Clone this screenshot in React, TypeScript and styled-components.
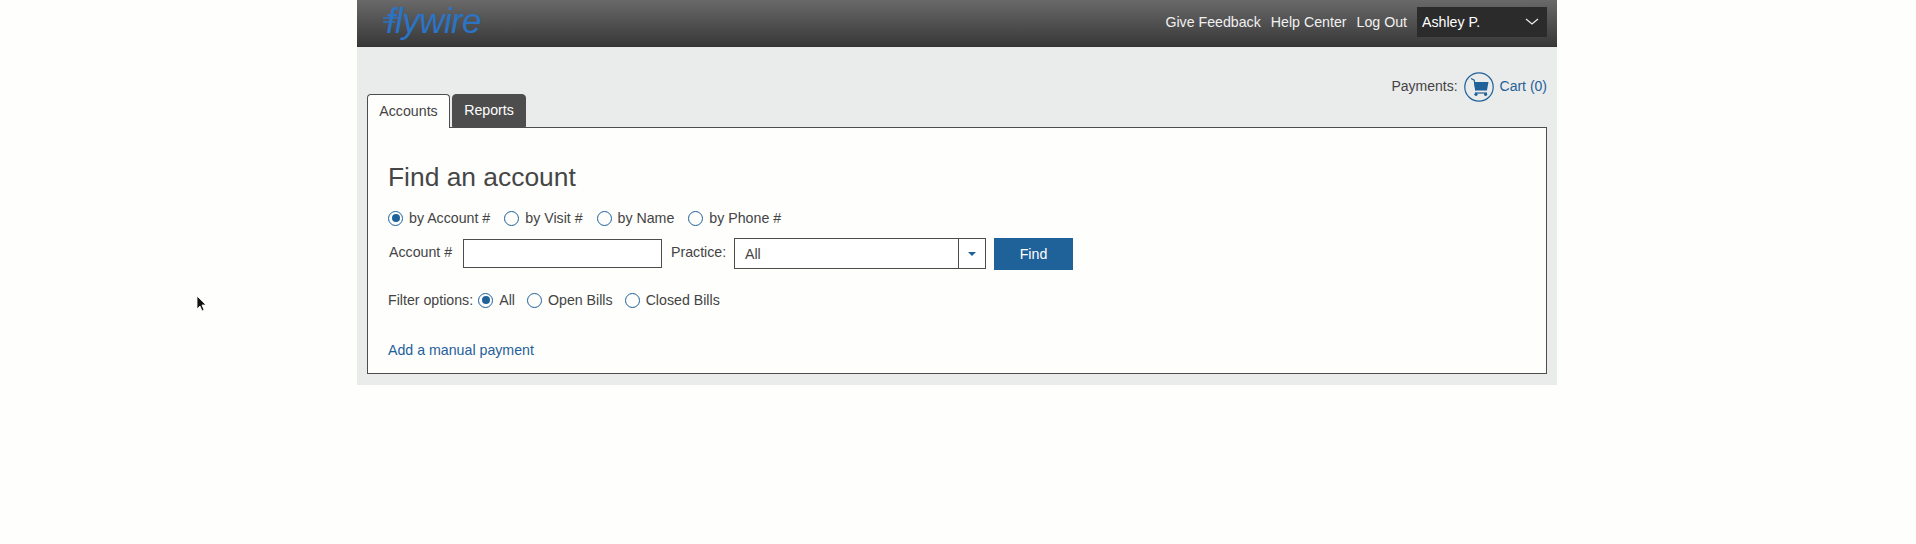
import React from 'react';
import styled, { createGlobalStyle } from 'styled-components';

const GlobalStyle = createGlobalStyle`
  html, body {
    margin: 0;
    padding: 0;
    background: #fefefd;
    font-family: "Liberation Sans", Arial, sans-serif;
    font-size: 14.2px;
    color: #444;
  }
`;

const Page = styled.div`
  position: relative;
  width: 1916px;
  height: 544px;
  overflow: hidden;
`;

const Container = styled.div`
  width: 1200px;
  margin-left: 357px;
  background: #eaebeb;
`;

const Header = styled.header`
  height: 47px;
  box-sizing: border-box;
  display: flex;
  align-items: center;
  justify-content: space-between;
  padding: 0 10px 0 25px;
  background: linear-gradient(#696969, #383838);
  border-bottom: 1px solid #333;
`;

const Logo = styled.div`
  position: relative;
  height: 44px;
  padding-left: 4px;
`;

const LogoMark = styled.svg`
  position: absolute;
  left: 0;
  top: 14px;
`;

const LogoText = styled.div`
  font-family: "Liberation Sans", Arial, sans-serif;
  font-style: italic;
  font-size: 35px;
  line-height: 40px;
  letter-spacing: -0.6px;
  color: #2a73c5;
`;

const HeaderNav = styled.nav`
  display: flex;
  align-items: center;
  gap: 10px;
  margin-bottom: 2px;
`;

const HeaderLink = styled.a`
  color: #f0f0f0;
`;

const UserMenu = styled.div`
  width: 130px;
  height: 30px;
  box-sizing: border-box;
  display: flex;
  align-items: center;
  justify-content: space-between;
  padding: 0 8px 0 5px;
  background: #2b2b2b;
  color: #fff;
`;

const Main = styled.main`
  padding: 0 10px 11px;
`;

const PaymentRow = styled.div`
  height: 55px;
  display: flex;
  align-items: flex-end;
  justify-content: flex-end;
  gap: 6px;
  font-size: 14px;
`;

const PaymentText = styled.span`
  line-height: 28px;
  margin-bottom: 2px;
`;

const BlueLink = styled.a`
  color: #1f6199;
  line-height: 28px;
  margin-bottom: 2px;
`;

const Tabs = styled.div`
  display: flex;
  gap: 2px;
  margin-top: -8px;
  margin-bottom: -1px;
  position: relative;
  z-index: 1;
`;

const Tab = styled.div<{ $active?: boolean }>`
  box-sizing: border-box;
  display: flex;
  align-items: center;
  justify-content: center;
  padding-bottom: 1px;
  border-radius: 4px 4px 0 0;
  width: ${(p) => (p.$active ? '83px' : '74px')};
  height: ${(p) => (p.$active ? '34px' : '33px')};
  background: ${(p) => (p.$active ? '#fefefd' : '#4d4d4d')};
  color: ${(p) => (p.$active ? '#444' : '#fff')};
  border: 1px solid #4d4d4d;
  border-bottom: ${(p) => (p.$active ? 'none' : '1px solid #4d4d4d')};
`;

const Panel = styled.section`
  height: 247px;
  box-sizing: border-box;
  padding: 33px 20px 0;
  background: #fefefd;
  border: 1px solid #4d4d4d;
`;

const Title = styled.h1`
  margin: 0;
  font-size: 26.4px;
  font-weight: 400;
  line-height: 32px;
  color: #464646;
`;

const RadioRow = styled.div<{ $top: number; $gap: number }>`
  display: flex;
  align-items: center;
  gap: ${(p) => p.$gap}px;
  height: 20px;
  margin-top: ${(p) => p.$top}px;
`;

const RadioOption = styled.label`
  display: flex;
  align-items: center;
  gap: 6px;
`;

const RadioCircle = styled.span<{ $checked?: boolean }>`
  width: 15px;
  height: 15px;
  box-sizing: border-box;
  border: 1.5px solid #1f6199;
  border-radius: 50%;
  display: flex;
  align-items: center;
  justify-content: center;

  &::after {
    content: '';
    display: ${(p) => (p.$checked ? 'block' : 'none')};
    width: 8px;
    height: 8px;
    border-radius: 50%;
    background: #1f6199;
  }
`;

const SearchRow = styled.div`
  display: flex;
  align-items: center;
  margin-top: 10px;
  height: 31px;
`;

const FieldLabel = styled.label<{ $left: number; $width: number }>`
  margin-left: ${(p) => p.$left}px;
  width: ${(p) => p.$width}px;
  margin-top: -3px;
`;

const TextInput = styled.input`
  width: 199px;
  height: 29px;
  box-sizing: border-box;
  border: 1px solid #4d4d4d;
  background: #fff;
  padding: 0;
  outline: none;
`;

const SelectBox = styled.div`
  width: 252px;
  height: 31px;
  box-sizing: border-box;
  display: flex;
  border: 1px solid #4d4d4d;
  background: #fff;
`;

const SelectValue = styled.span`
  flex: 1;
  padding-left: 10px;
  line-height: 30px;
`;

const SelectArrow = styled.span`
  width: 26px;
  display: flex;
  align-items: center;
  justify-content: center;
  border-left: 1px solid #4d4d4d;

  &::after {
    content: '';
    border-left: 4px solid transparent;
    border-right: 4px solid transparent;
    border-top: 4px solid #1f6199;
  }
`;

const FindButton = styled.button`
  width: 79px;
  height: 32px;
  margin-left: 8px;
  border: none;
  background: #1f6199;
  color: #fff;
  font: inherit;
`;

const FilterLabel = styled.span`
  margin-right: -7px;
`;

const FooterLink = styled.a`
  display: block;
  margin-top: 30px;
  color: #1f6199;
  line-height: 20px;
`;

const Cursor = styled.svg`
  position: absolute;
  left: 196px;
  top: 295px;
`;

const CartIcon = () => (
  <svg width="30" height="30" viewBox="0 0 30 30">
    <circle cx="15" cy="15" r="14.2" fill="none" stroke="#1f6199" strokeWidth="1.2" />
    <path d="M7 6.5l3.2 1.6 1.6 10.4" fill="none" stroke="#1f6199" strokeWidth="1.2" />
    <path d="M10 10h14.5l-1.6 8.5H11.4z" fill="#1f6199" />
    <path d="M11 21h12" stroke="#1f6199" strokeWidth="1.2" />
    <circle cx="12" cy="22.3" r="1.6" fill="#1f6199" />
    <circle cx="21.6" cy="22.3" r="1.6" fill="#1f6199" />
  </svg>
);

const Radio = ({ label, checked }: { label: string; checked?: boolean }) => (
  <RadioOption>
    <RadioCircle $checked={checked} />
    {label}
  </RadioOption>
);

const App = () => (
  <Page>
    <GlobalStyle />
    <Container>
      <Header>
        <Logo>
          <LogoText>flywire</LogoText>
          <LogoMark width="18" height="12" viewBox="0 0 18 12">
            <path d="M1 3h15M1 7h12" stroke="#2a73c5" strokeWidth="1.4" fill="none" />
          </LogoMark>
        </Logo>
        <HeaderNav>
          <HeaderLink>Give Feedback</HeaderLink>
          <HeaderLink>Help Center</HeaderLink>
          <HeaderLink>Log Out</HeaderLink>
          <UserMenu>
            Ashley P.
            <svg width="14" height="8" viewBox="0 0 14 8">
              <path d="M1 1l6 5 6-5" fill="none" stroke="#eee" strokeWidth="1.2" />
            </svg>
          </UserMenu>
        </HeaderNav>
      </Header>
      <Main>
        <PaymentRow>
          <PaymentText>Payments:</PaymentText>
          <CartIcon />
          <BlueLink>Cart (0)</BlueLink>
        </PaymentRow>
        <Tabs>
          <Tab $active>Accounts</Tab>
          <Tab>Reports</Tab>
        </Tabs>
        <Panel>
          <Title>Find an account</Title>
          <RadioRow $top={15} $gap={14}>
            <Radio label="by Account #" checked />
            <Radio label="by Visit #" />
            <Radio label="by Name" />
            <Radio label="by Phone #" />
          </RadioRow>
          <SearchRow>
            <FieldLabel $left={1} $width={74}>Account #</FieldLabel>
            <TextInput aria-label="Account #" />
            <FieldLabel $left={9} $width={63}>Practice:</FieldLabel>
            <SelectBox>
              <SelectValue>All</SelectValue>
              <SelectArrow />
            </SelectBox>
            <FindButton>Find</FindButton>
          </SearchRow>
          <RadioRow $top={21} $gap={12}>
            <FilterLabel>Filter options:</FilterLabel>
            <Radio label="All" checked />
            <Radio label="Open Bills" />
            <Radio label="Closed Bills" />
          </RadioRow>
          <FooterLink>Add a manual payment</FooterLink>
        </Panel>
      </Main>
    </Container>
    <Cursor width="12" height="18" viewBox="0 0 12 18">
      <path d="M1 1v13l3-3 2 5 2-1-2-5h4z" fill="#111" stroke="#fff" strokeWidth="0.8" />
    </Cursor>
  </Page>
);

export default App;
